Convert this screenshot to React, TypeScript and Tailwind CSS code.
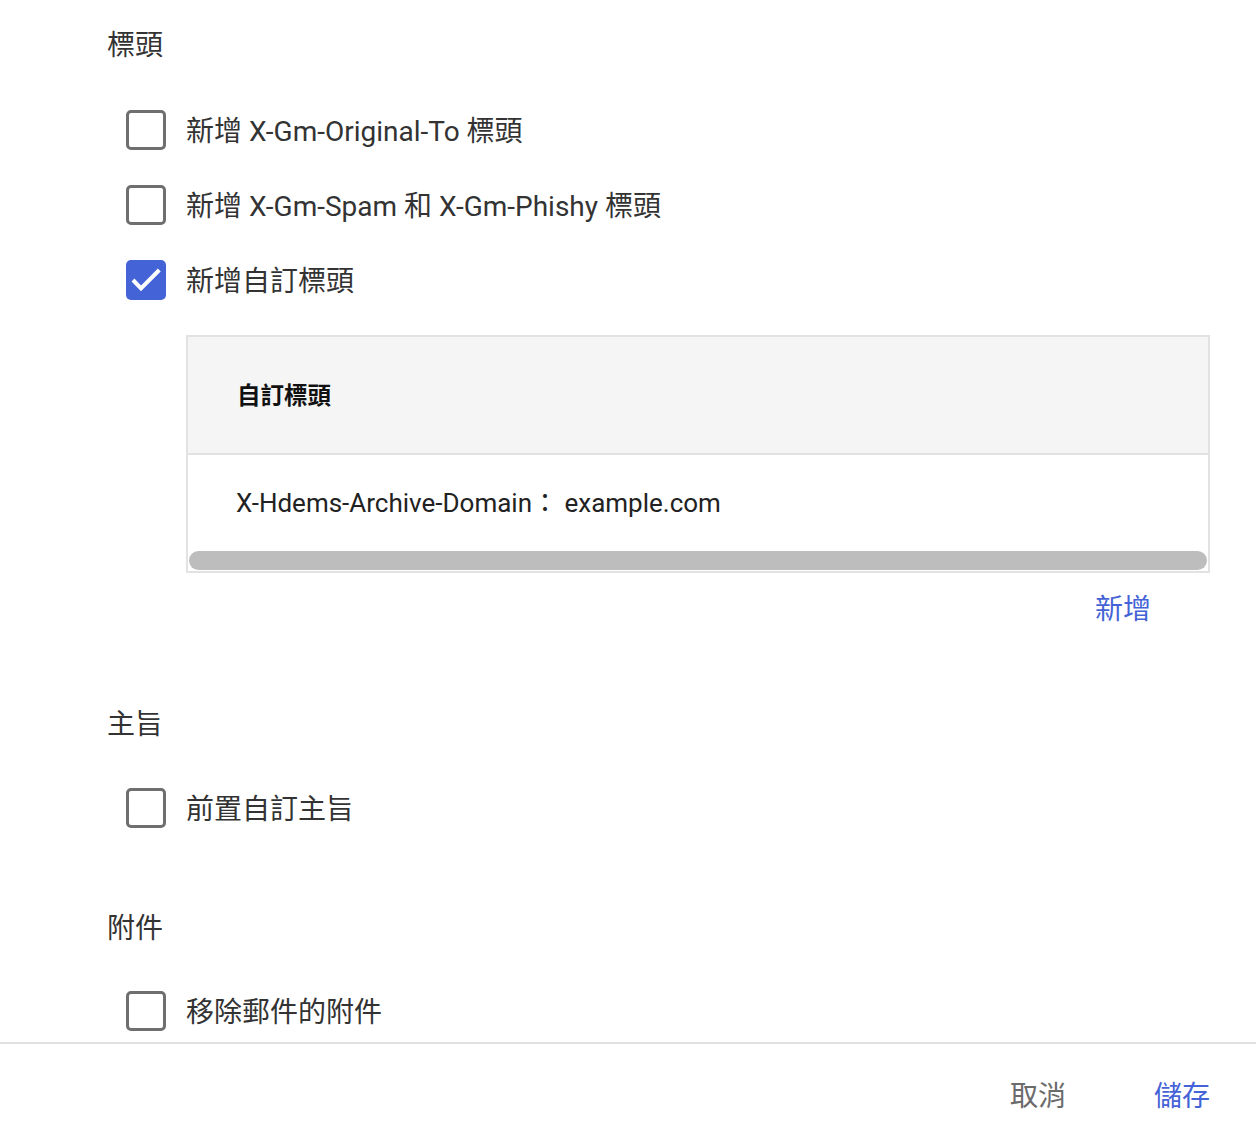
import { useState } from "react";

const FONT = "font-['Roboto','Noto_Sans_CJK_TC',sans-serif]";

function Checkbox({ checked, onChange }: { checked: boolean; onChange: () => void }) {
  return (
    <button
      type="button"
      onClick={onChange}
      className={
        checked
          ? "w-10 h-10 rounded-[5px] bg-[#4463d6] shrink-0"
          : "w-10 h-10 rounded-[5px] border-[3.5px] border-[#6f6f6f] bg-white shrink-0"
      }
    >
      {checked && (
        <svg width="40" height="40" viewBox="0 0 40 40" fill="none">
          <path d="M7 20l8 8.3L33.3 10" stroke="white" strokeWidth="4" />
        </svg>
      )}
    </button>
  );
}

function Row({ label, checked, onChange }: { label: string; checked: boolean; onChange: () => void }) {
  return (
    <div className="h-[75px] flex items-center gap-5 pl-[19px]">
      <Checkbox checked={checked} onChange={onChange} />
      <span className="text-[28px] text-[#333333] pt-[4px]">{label}</span>
    </div>
  );
}

export default function App() {
  const [opts, setOpts] = useState({
    originalTo: false,
    spam: false,
    custom: true,
    subject: false,
    attachments: false,
  });
  const toggle = (k: keyof typeof opts) => setOpts((o) => ({ ...o, [k]: !o[k] }));

  return (
    <div className={`${FONT} h-[1146px] flex flex-col bg-white`}>
      <div className="flex-1 overflow-hidden pl-[107px] pr-[46px] pt-[28px]">
        <h2 className="text-[28px] leading-[36px] text-[#333333]">標頭</h2>
        <div className="mt-[28px]">
          <Row label="新增 X-Gm-Original-To 標頭" checked={opts.originalTo} onChange={() => toggle("originalTo")} />
          <Row label="新增 X-Gm-Spam 和 X-Gm-Phishy 標頭" checked={opts.spam} onChange={() => toggle("spam")} />
          <Row label="新增自訂標頭" checked={opts.custom} onChange={() => toggle("custom")} />
        </div>

        <div className="ml-[79px] mt-[18px] border-2 border-[#e2e2e2]">
          <div className="h-[118px] bg-[#f5f5f5] flex items-center pl-[49px] pt-[4px] border-b-2 border-[#e2e2e2]">
            <span className="text-[23.5px] font-bold text-[#111111]">自訂標頭</span>
          </div>
          <div className="h-[96px] flex items-center pl-[48px]">
            <span className="text-[26px] text-[#222222]">X-Hdems-Archive-Domain： example.com</span>
          </div>
          <div className="h-5 px-px pb-px">
            <div className="h-full rounded-full bg-[#bdbdbd]" />
          </div>
        </div>

        <div className="flex justify-end mt-[19px] pr-[59px]">
          <button className="text-[28px] leading-[36px] text-[#4463d6]">新增</button>
        </div>

        <h2 className="mt-[79px] text-[28px] leading-[36px] text-[#333333]">主旨</h2>
        <div className="mt-[27px]">
          <Row label="前置自訂主旨" checked={opts.subject} onChange={() => toggle("subject")} />
        </div>

        <h2 className="mt-[66px] text-[28px] leading-[36px] text-[#333333]">附件</h2>
        <div className="mt-[26px]">
          <Row label="移除郵件的附件" checked={opts.attachments} onChange={() => toggle("attachments")} />
        </div>
      </div>

      <div className="h-[104px] shrink-0 border-t-2 border-[#e0e0e0] flex items-center justify-end gap-[88px] pr-[46px] pt-[3px]">
        <button className="text-[28px] text-[#6b6b6b]">取消</button>
        <button className="text-[28px] text-[#4463d6]">儲存</button>
      </div>
    </div>
  );
}
